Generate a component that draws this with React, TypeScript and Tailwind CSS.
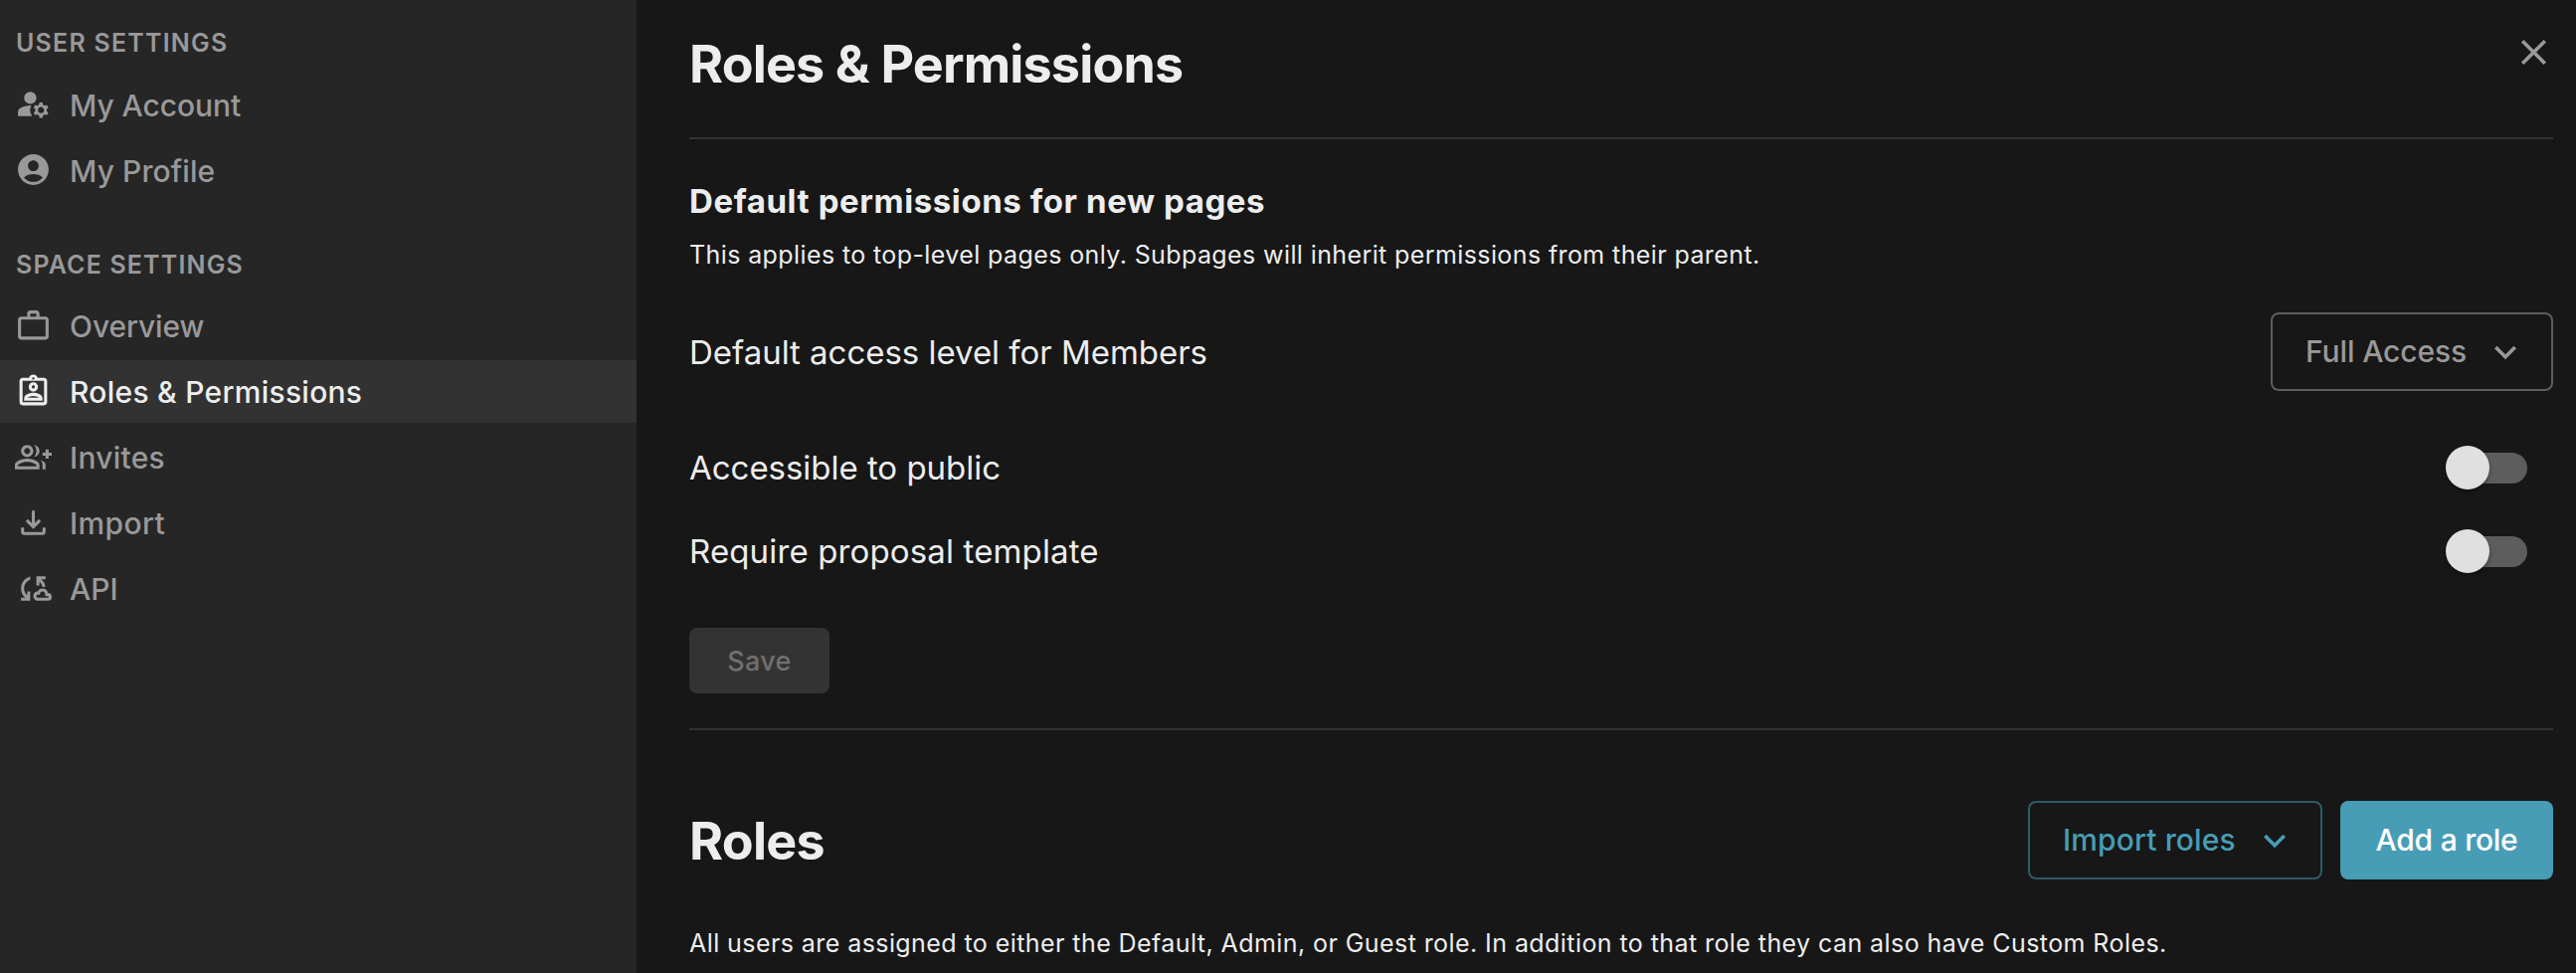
import type { IconType } from "react-icons";
import {
  MdAccountCircle,
  MdClose,
  MdKeyboardArrowDown,
  MdManageAccounts,
  MdOutlineAssignmentInd,
  MdOutlineCloudSync,
  MdOutlineFileDownload,
  MdOutlineGroupAdd,
  MdWorkOutline,
} from "react-icons/md";

interface NavItem {
  label: string;
  icon: IconType;
  tracking: string;
  active?: boolean;
}

const userItems: NavItem[] = [
  { label: "My Account", icon: MdManageAccounts, tracking: "tracking-[-0.08px]" },
  { label: "My Profile", icon: MdAccountCircle, tracking: "tracking-[0.08px]" },
];

const spaceItems: NavItem[] = [
  { label: "Overview", icon: MdWorkOutline, tracking: "tracking-[-0.1px]" },
  { label: "Roles & Permissions", icon: MdOutlineAssignmentInd, tracking: "tracking-[0.27px]", active: true },
  { label: "Invites", icon: MdOutlineGroupAdd, tracking: "tracking-[0.25px]" },
  { label: "Import", icon: MdOutlineFileDownload, tracking: "tracking-[0.4px]" },
  { label: "API", icon: MdOutlineCloudSync, tracking: "tracking-normal" },
];

function NavList({ items, iconShift }: { items: NavItem[]; iconShift?: string }) {
  return (
    <ul className="flex flex-col gap-[3px]">
      {items.map(({ label, icon: Icon, tracking, active }) => (
        <li
          key={label}
          className={`flex h-[63px] items-center gap-[18px] pl-[15px] text-[30px] font-medium ${tracking} ${
            active ? "bg-[#323232] text-[#ededed]" : "text-[#999999]"
          }`}
        >
          <Icon className={`size-[37px] shrink-0 ${iconShift ?? ""}`} />
          <span className="leading-[36px]">{label}</span>
        </li>
      ))}
    </ul>
  );
}

function Toggle() {
  return (
    <button type="button" role="switch" aria-checked="false" className="mr-[26px] flex h-[44px] w-[82px] items-center">
      <span className="-mr-[37px] size-[44px] shrink-0 z-10 rounded-full bg-[#e0e0e0] shadow-[0_2px_4px_rgba(0,0,0,0.35)]" />
      <span className="h-[31px] w-[75px] shrink-0 rounded-full bg-[#5d5d5d]" />
    </button>
  );
}

function SettingRow({ label, tracking }: { label: string; tracking: string }) {
  return (
    <div className="flex h-[84px] items-center justify-between">
      <span className={`text-[33px] leading-[40px] ${tracking}`}>{label}</span>
      <Toggle />
    </div>
  );
}

export default function App() {
  return (
    <div className="flex h-[978px] w-[2590px] overflow-hidden bg-[#171717] font-['Inter',sans-serif] text-[#ededed]">
      <aside className="w-[640px] shrink-0 bg-[#262626]">
        <h3 className="pt-[28px] pb-[16px] pl-[16px] text-[25px] leading-[30px] font-semibold tracking-[1.21px] text-[#999999]">
          USER SETTINGS
        </h3>
        <NavList items={userItems} iconShift="mb-[2px]" />
        <h3 className="pt-[48px] pb-[15px] pl-[16px] text-[25px] leading-[30px] font-semibold tracking-[1.16px] text-[#999999]">
          SPACE SETTINGS
        </h3>
        <NavList items={spaceItems} />
      </aside>

      <main className="flex-1 pr-[23px] pl-[53px]">
        <header className="flex h-[140px] items-start justify-between border-b-2 border-[#333333]">
          <h1 className="pt-[33px] text-[52px] leading-[64px] font-bold tracking-[-0.84px]">Roles &amp; Permissions</h1>
          <button type="button" aria-label="Close" className="mt-[31px] -mr-[2px] text-[#999999]">
            <MdClose className="size-[43px]" />
          </button>
        </header>

        <section className="border-b-2 border-[#333333] pt-[42px] pb-[35px]">
          <h2 className="text-[33px] leading-[40px] font-bold tracking-[0.58px]">Default permissions for new pages</h2>
          <p className="mt-[18px] text-[25px] leading-[32px] tracking-[0.395px]">
            This applies to top-level pages only. Subpages will inherit permissions from their parent.
          </p>

          <div className="mt-[42px] flex h-[79px] items-center justify-between">
            <span className="text-[33px] leading-[40px] tracking-[-0.03px]">Default access level for Members</span>
            <button
              type="button"
              className="flex h-[79px] w-[284px] items-center justify-between rounded-[8px] border-2 border-[#5d5d5d] pr-[24px] pl-[33px] text-[30px] font-medium tracking-[-0.13px] text-[#999999]"
            >
              Full Access
              <MdKeyboardArrowDown className="size-[44px]" />
            </button>
          </div>

          <div className="mt-[35px]">
            <SettingRow label="Accessible to public" tracking="tracking-[-0.03px]" />
            <SettingRow label="Require proposal template" tracking="tracking-[0.14px]" />
          </div>

          <button
            type="button"
            className="mt-[35px] flex h-[66px] w-[141px] items-center justify-center rounded-[8px] bg-[#333333] pt-[2px] text-[27px] font-medium tracking-[0.38px] text-[#707070]"
          >
            Save
          </button>
        </section>

        <section className="pt-[71px]">
          <div className="flex h-[79px] items-center justify-between">
            <h1 className="pt-[2px] text-[52px] leading-[64px] font-bold tracking-[-0.75px]">Roles</h1>
            <div className="flex gap-[18px]">
              <button
                type="button"
                className="flex h-[79px] w-[296px] items-center justify-between rounded-[8px] border-2 border-[#2f5b66] pr-[24px] pl-[33px] text-[30px] font-medium tracking-[0.12px] text-[#479db5]"
              >
                Import roles
                <MdKeyboardArrowDown className="size-[44px]" />
              </button>
              <button
                type="button"
                className="flex h-[79px] w-[214px] items-center justify-center rounded-[8px] bg-[#479db5] text-[30px] font-medium tracking-[-0.26px] text-white"
              >
                Add a role
              </button>
            </div>
          </div>
          <p className="mt-[48px] text-[25px] leading-[32px] tracking-[0.425px]">
            All users are assigned to either the Default, Admin, or Guest role. In addition to that role they can also
            have Custom Roles.
          </p>
        </section>
      </main>
    </div>
  );
}
